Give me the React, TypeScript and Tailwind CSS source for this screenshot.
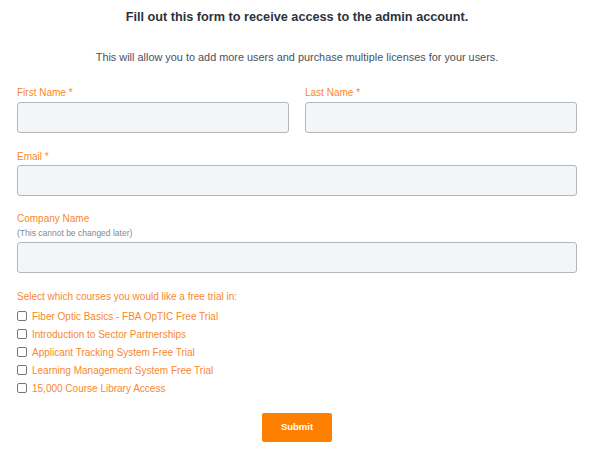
import React from 'react';

const courses = [
  'Fiber Optic Basics - FBA OpTIC Free Trial',
  'Introduction to Sector Partnerships',
  'Applicant Tracking System Free Trial',
  'Learning Management System Free Trial',
  '15,000 Course Library Access',
];

const inputCls =
  'block w-full h-[31px] rounded-[3px] border border-[#b4b7ba] bg-[#f3f6f9] px-2 text-[11px] outline-none';
const labelCls = 'block text-[10px] leading-[14px] text-[#f7882f]';

export default function App() {
  return (
    <div className="min-h-[473px] bg-white pl-[17px] pr-[23px] pt-[9px] font-['Liberation_Sans',Arial,sans-serif]">
      <h1 className="text-center text-[12.7px] font-bold leading-[16px] text-[#2b3340]">
        Fill out this form to receive access to the admin account.
      </h1>
      <p className="mt-[24px] text-center text-[10.9px] leading-[16px] text-[#4a5160]">
        This will allow you to add more users and purchase multiple licenses for your users.
      </p>

      <form className="mt-[21px]">
        <div className="grid grid-cols-2 gap-[16px]">
          <div>
            <label className={labelCls}>First Name *</label>
            <input className={`${inputCls} mt-[2px]`} />
          </div>
          <div>
            <label className={labelCls}>Last Name *</label>
            <input className={`${inputCls} mt-[2px]`} />
          </div>
        </div>

        <div className="mt-[17px]">
          <label className={labelCls}>Email *</label>
          <input className={`${inputCls} mt-[1px]`} />
        </div>

        <div className="mt-[16px]">
          <label className={labelCls}>Company Name</label>
          <span className="mt-[1px] block text-[8.5px] leading-[12px] text-[#7d8a99]">
            (This cannot be changed later)
          </span>
          <input className={`${inputCls} mt-[3px]`} />
        </div>

        <div className="mt-[17px]">
          <span className={labelCls}>Select which courses you would like a free trial in:</span>
          <div className="mt-[3px] flex flex-col">
            {courses.map((c) => (
              <label key={c} className="flex h-[18px] items-center gap-[5px] text-[10px] text-[#f7882f]">
                <span className="inline-block h-[10px] w-[10px] rounded-[2px] border border-[#767676] bg-white" />
                {c}
              </label>
            ))}
          </div>
        </div>

        <div className="mt-[16px] flex justify-center">
          <button
            type="button"
            className="h-[29px] w-[70px] rounded-[2px] bg-[#ff7f00] text-[9.5px] font-bold text-white"
          >
            Submit
          </button>
        </div>
      </form>
    </div>
  );
}
